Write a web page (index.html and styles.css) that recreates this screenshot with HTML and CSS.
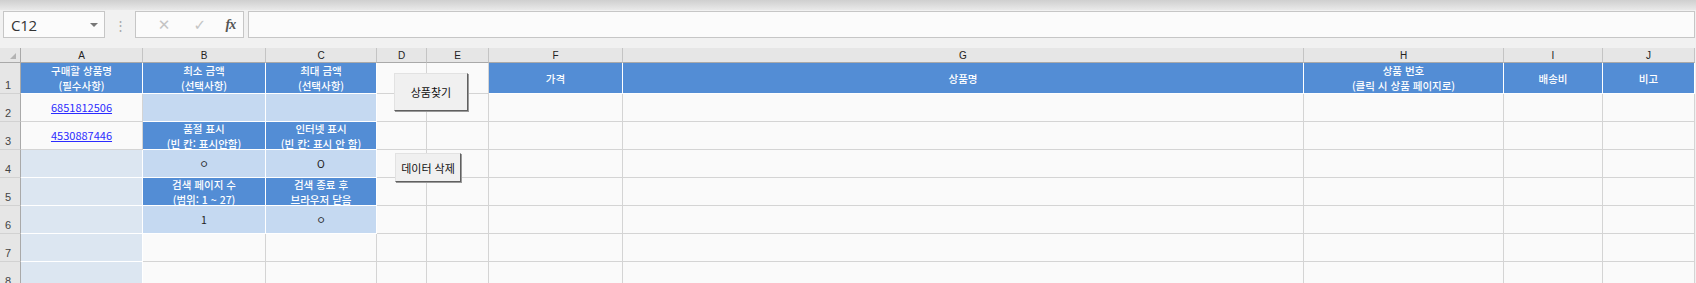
FILE: index.html
```html
<!DOCTYPE html>
<html lang="ko">
<head>
    <meta charset="UTF-8">
    <title>상품찾기</title>
    <link rel="stylesheet" href="styles.css">
</head>
<body>
    <div class="topbar"></div>
    <div class="fbar">
        <div class="namebox">
            <span class="ref">C12</span>
            <span class="caret"></span>
        </div>
        <div class="dots">⋮</div>
        <div class="fbtns">
            <span class="ico">✕</span>
            <span class="ico">✓</span>
            <span class="ico fx">fx</span>
        </div>
        <div class="finput"></div>
    </div>

    <div class="sheet">
        <div class="grid">
            <div class="ch corner"><span class="tri"></span></div>
            <div class="ch">A</div>
            <div class="ch">B</div>
            <div class="ch">C</div>
            <div class="ch">D</div>
            <div class="ch">E</div>
            <div class="ch">F</div>
            <div class="ch">G</div>
            <div class="ch">H</div>
            <div class="ch">I</div>
            <div class="ch">J</div>

            <div class="rh">1</div>
            <div class="c hd">구매할 상품명<br>(필수사항)</div>
            <div class="c hd">최소 금액<br>(선택사항)</div>
            <div class="c hd">최대 금액<br>(선택사항)</div>
            <div class="c"></div>
            <div class="c"></div>
            <div class="c hd">가격</div>
            <div class="c hd">상품명</div>
            <div class="c hd">상품 번호<br>(클릭 시 상품 페이지로)</div>
            <div class="c hd">배송비</div>
            <div class="c hd">비고</div>

            <div class="rh">2</div>
            <div class="c"><a class="link" href="#">6851812506</a></div>
            <div class="c lt"></div>
            <div class="c lt"></div>
            <div class="c"></div>
            <div class="c"></div>
            <div class="c"></div>
            <div class="c"></div>
            <div class="c"></div>
            <div class="c"></div>
            <div class="c"></div>

            <div class="rh">3</div>
            <div class="c"><a class="link" href="#">4530887446</a></div>
            <div class="c hd">품절 표시<br>(빈 칸: 표시안함)</div>
            <div class="c hd">인터넷 표시<br>(빈 칸: 표시 안 함)</div>
            <div class="c"></div>
            <div class="c"></div>
            <div class="c"></div>
            <div class="c"></div>
            <div class="c"></div>
            <div class="c"></div>
            <div class="c"></div>

            <div class="rh">4</div>
            <div class="c la"></div>
            <div class="c lt">ㅇ</div>
            <div class="c lt">O</div>
            <div class="c"></div>
            <div class="c"></div>
            <div class="c"></div>
            <div class="c"></div>
            <div class="c"></div>
            <div class="c"></div>
            <div class="c"></div>

            <div class="rh">5</div>
            <div class="c la"></div>
            <div class="c hd">검색 페이지 수<br>(범위: 1 ~ 27)</div>
            <div class="c hd">검색 종료 후<br>브라우저 닫음</div>
            <div class="c"></div>
            <div class="c"></div>
            <div class="c"></div>
            <div class="c"></div>
            <div class="c"></div>
            <div class="c"></div>
            <div class="c"></div>

            <div class="rh">6</div>
            <div class="c la"></div>
            <div class="c lt">1</div>
            <div class="c lt">ㅇ</div>
            <div class="c"></div>
            <div class="c"></div>
            <div class="c"></div>
            <div class="c"></div>
            <div class="c"></div>
            <div class="c"></div>
            <div class="c"></div>

            <div class="rh">7</div>
            <div class="c la"></div>
            <div class="c"></div>
            <div class="c"></div>
            <div class="c"></div>
            <div class="c"></div>
            <div class="c"></div>
            <div class="c"></div>
            <div class="c"></div>
            <div class="c"></div>
            <div class="c"></div>

            <div class="rh">8</div>
            <div class="c la"></div>
            <div class="c"></div>
            <div class="c"></div>
            <div class="c"></div>
            <div class="c"></div>
            <div class="c"></div>
            <div class="c"></div>
            <div class="c"></div>
            <div class="c"></div>
            <div class="c"></div>
        </div>

        <button class="btn btn-find">상품찾기</button>
        <button class="btn btn-del">데이터 삭제</button>
    </div>
</body>
</html>
```

FILE: styles.css
```css
*{
    margin: 0;
    padding: 0;
    box-sizing: border-box;
}
html, body{
    width: 1696px;
    height: 283px;
    overflow: hidden;
    background-color: #f1f1f1;
    font-family: "Noto Sans CJK KR", "Noto Sans", sans-serif;
}
.topbar{
    height: 10px;
    background: linear-gradient(#cfcfcf, #e9e9e9);
}
.fbar{
    display: flex;
    height: 38px;
    padding: 1px 1px 0 3px;
}
.namebox{
    display: flex;
    align-items: center;
    justify-content: space-between;
    width: 102px;
    height: 27px;
    padding: 0 6px 0 7px;
    border: 1px solid #c6c6c6;
    background-color: #fbfbfb;
}
.namebox .ref{
    font-family: "Open Sans", "Noto Sans", sans-serif;
    font-size: 15px;
    color: #333;
    letter-spacing: -0.3px;
}
.namebox .caret{
    width: 0;
    height: 0;
    border-left: 4px solid transparent;
    border-right: 4px solid transparent;
    border-top: 4px solid #777;
}
.dots{
    width: 30px;
    height: 27px;
    line-height: 27px;
    text-align: center;
    font-size: 13px;
    color: #a8a8a8;
}
.fbtns{
    display: flex;
    align-items: center;
    width: 109px;
    height: 27px;
    padding-left: 10px;
    border: 1px solid #c6c6c6;
    background-color: #fbfbfb;
}
.fbtns .ico{
    width: 37px;
    text-align: center;
    font-family: "DejaVu Sans", sans-serif;
    font-size: 15px;
    color: #c4c4c4;
}
.fbtns .fx{
    width: 26px;
    font-family: "Liberation Serif", serif;
    font-style: italic;
    font-weight: bold;
    font-size: 14px;
    color: #555;
    letter-spacing: -1px;
}
.finput{
    flex: 1;
    height: 27px;
    margin-left: 4px;
    border: 1px solid #c6c6c6;
    background-color: #fbfbfb;
}

.sheet{
    position: relative;
}
.grid{
    display: grid;
    grid-template-columns: 21px 122px 123px 111px 50px 62px 134px 681px 200px 99px 92px;
    grid-template-rows: 15px 31px repeat(7, 28px);
}
.ch{
    display: flex;
    align-items: center;
    justify-content: center;
    border-right: 1px solid #c4c4c4;
    border-bottom: 1px solid #a9a9a9;
    background-color: #e6e6e6;
    font-family: "Liberation Sans", sans-serif;
    font-size: 10px;
    color: #222;
}
.corner{
    position: relative;
    border-right-color: #a9a9a9;
}
.corner .tri{
    position: absolute;
    right: 4px;
    bottom: 3px;
    width: 0;
    height: 0;
    border-left: 6px solid transparent;
    border-bottom: 6px solid #b3b3b3;
}
.rh{
    display: flex;
    align-items: flex-end;
    padding: 0 0 2px 5px;
    border-right: 1px solid #a9a9a9;
    border-bottom: 1px solid #d2d2d2;
    background-color: #e6e6e6;
    font-family: "Liberation Sans", sans-serif;
    font-size: 11px;
    color: #444;
}
.c{
    display: flex;
    align-items: center;
    justify-content: center;
    border-right: 1px solid #d4d4d4;
    border-bottom: 1px solid #d4d4d4;
    background-color: #fafafa;
    font-size: 10.5px;
    line-height: 15px;
    text-align: center;
    color: #222;
    white-space: nowrap;
}
.c.hd{
    border-color: #fff;
    background-color: #538dd5;
    color: #fff;
    font-weight: 500;
}
.c.lt{
    border-color: #fff;
    background-color: #c5d9f1;
}
.c.la{
    border-color: #fff;
    background-color: #dce6f1;
}
.link{
    font-size: 11px;
    color: #2b2bff;
    text-decoration: underline;
}

.btn{
    position: absolute;
    border: 1px solid;
    border-color: #e2e2e2 #606060 #606060 #e2e2e2;
    box-shadow: 1px 1px 0 #9a9a9a;
    background-color: #f0f0f0;
    font-family: "Noto Sans CJK KR", sans-serif;
    font-size: 11px;
    color: #111;
}
.btn-find{
    left: 394px;
    top: 25px;
    width: 74px;
    height: 38px;
}
.btn-del{
    left: 395px;
    top: 105px;
    width: 66px;
    height: 29px;
}
```
